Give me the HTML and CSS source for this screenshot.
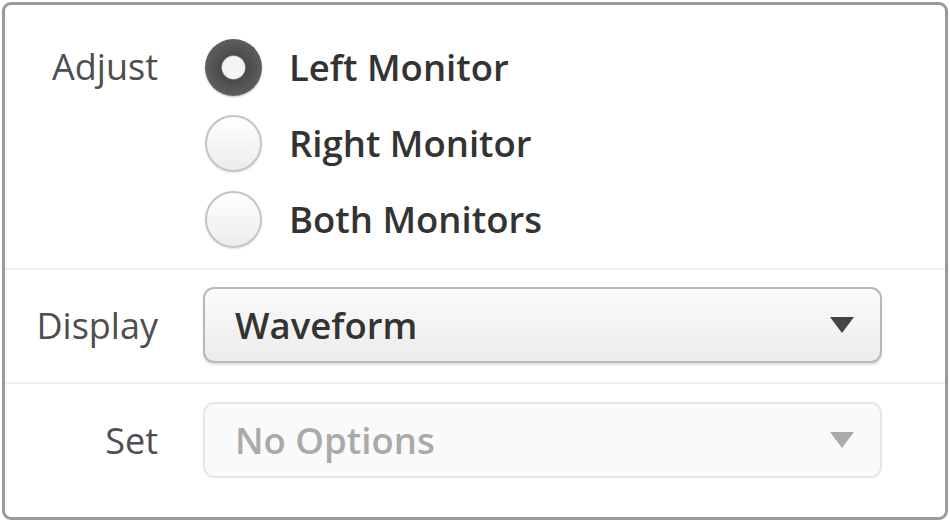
FILE: index.html
```html
<!DOCTYPE html>
<html lang="en">
<head>
    <meta charset="UTF-8">
    <meta name="viewport" content="width=device-width, initial-scale=1.0">
    <title>Monitor Settings</title>
    <link rel="stylesheet" href="styles.css">
</head>
<body>
    <div class="panel">
        <div class="row row-adjust">
            <div class="label label-top">Adjust</div>
            <div class="radios">
                <div class="radio-item">
                    <span class="radio checked"></span>
                    <span class="radio-text">Left Monitor</span>
                </div>
                <div class="radio-item">
                    <span class="radio"></span>
                    <span class="radio-text">Right Monitor</span>
                </div>
                <div class="radio-item">
                    <span class="radio"></span>
                    <span class="radio-text">Both Monitors</span>
                </div>
            </div>
        </div>

        <div class="row row-display">
            <div class="label">Display</div>
            <div class="select">
                <span class="select-text">Waveform</span>
                <span class="arrow"></span>
            </div>
        </div>

        <div class="row row-set">
            <div class="label">Set</div>
            <div class="select disabled">
                <span class="select-text">No Options</span>
                <span class="arrow"></span>
            </div>
        </div>
    </div>
</body>
</html>
```

FILE: styles.css
```css
body {
    margin: 0;
    background: #fff;
    font-family: "Open Sans", "Liberation Sans", sans-serif;
}

.panel {
    box-sizing: border-box;
    margin: 2px;
    width: 946px;
    height: 518px;
    border: 3px solid #9a9a9a;
    border-radius: 9px;
    background: #fff;
}

.row {
    display: grid;
    grid-template-columns: 153px 679px;
    column-gap: 45px;
    align-items: center;
}

.row-adjust {
    align-items: start;
    padding: 24px 0 11px;
    border-bottom: 2px solid #eeeeee;
}

.row-display {
    padding: 17px 0 19px;
    border-bottom: 2px solid #eeeeee;
}

.row-set {
    padding: 18px 0;
}

.label {
    text-align: right;
    font-size: 36px;
    color: #4e4e4e;
}

.label-top {
    line-height: 76px;
}

.radios {
    display: flex;
    flex-direction: column;
}

.radio-item {
    display: flex;
    align-items: center;
    height: 76px;
    padding-left: 2px;
}

.radio {
    box-sizing: border-box;
    width: 57px;
    height: 57px;
    border-radius: 50%;
    border: 2px solid #c4c4c4;
    background: linear-gradient(#ffffff, #ececec);
    box-shadow: 0 1px 2px rgba(0, 0, 0, 0.12);
}

.radio.checked {
    border: none;
    background: radial-gradient(circle, #f4f4f4 0, #f4f4f4 11px, #4a4a4a 12.5px, #5e5e5e 28.5px);
    box-shadow: 0 1px 2px rgba(0, 0, 0, 0.25);
}

.radio-text {
    margin-left: 27px;
    font-size: 36.5px;
    font-weight: 600;
    color: #333;
}

.select {
    box-sizing: border-box;
    height: 76px;
    display: flex;
    align-items: center;
    justify-content: space-between;
    padding: 0 26px 0 30px;
    border: 2px solid #b8b8b8;
    border-radius: 11px;
    background: linear-gradient(#fbfbfb, #ececec);
    box-shadow: 0 2px 2px rgba(0, 0, 0, 0.12);
}

.select-text {
    font-size: 36.5px;
    font-weight: 600;
    color: #333;
}

.arrow {
    width: 0;
    height: 0;
    border-left: 12px solid transparent;
    border-right: 12px solid transparent;
    border-top: 16px solid #444;
}

.select.disabled {
    border-color: #e6e6e6;
    background: #fafafa;
    box-shadow: none;
}

.select.disabled .select-text {
    color: #aaa;
}

.select.disabled .arrow {
    border-top-color: #aaa;
}
```
